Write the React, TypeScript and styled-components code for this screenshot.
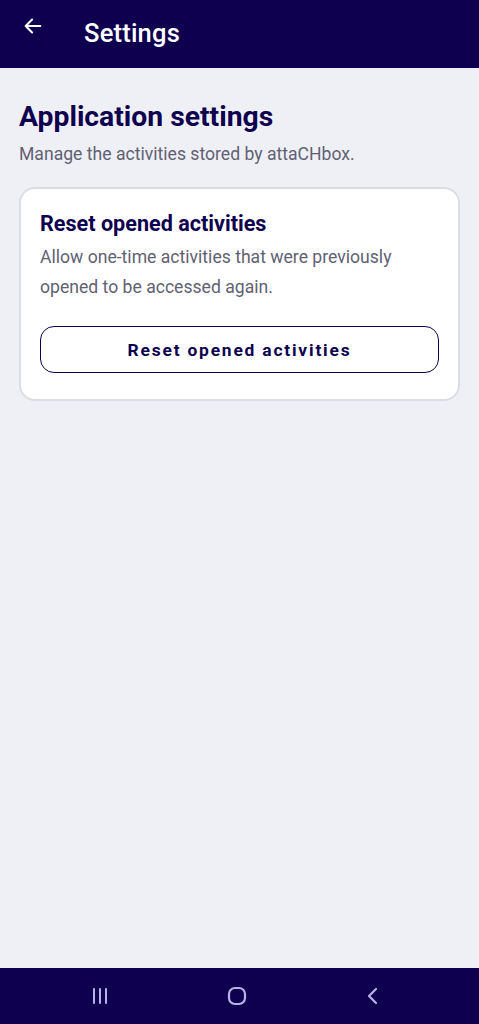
import styled, { createGlobalStyle } from "styled-components";

const GlobalStyle = createGlobalStyle`
  html, body {
    margin: 0;
    padding: 0;
    background: #eff0f5;
    font-family: Roboto, "Liberation Sans", sans-serif;
  }
  * { box-sizing: border-box; }
`;

export default function App() {
  return (
    <>
      <GlobalStyle />
      <StyledScreen>
        <StyledAppBar>
          <StyledBackButton aria-label="Back">
            <svg width="22" height="22" viewBox="0 0 24 24" fill="none">
              <path
                d="M20 12H4M11 5l-7 7 7 7"
                stroke="#fff"
                strokeWidth="2.2"
                strokeLinecap="round"
                strokeLinejoin="round"
              />
            </svg>
          </StyledBackButton>
          <StyledAppBarTitle>Settings</StyledAppBarTitle>
        </StyledAppBar>

        <StyledContent>
          <StyledHeadline>Application settings</StyledHeadline>
          <StyledLead>Manage the activities stored by attaCHbox.</StyledLead>

          <StyledCard>
            <StyledCardTitle>Reset opened activities</StyledCardTitle>
            <StyledCardText>
              Allow one-time activities that were previously opened to be
              accessed again.
            </StyledCardText>
            <StyledOutlineButton>Reset opened activities</StyledOutlineButton>
          </StyledCard>
        </StyledContent>

        <StyledNavBar>
          <svg width="22" height="20" viewBox="0 0 22 20">
            <path
              d="M5 3v14M11 3v14M17 3v14"
              stroke="#b9b2e6"
              strokeWidth="2"
              strokeLinecap="round"
            />
          </svg>
          <svg width="22" height="22" viewBox="0 0 22 22">
            <rect
              x="3"
              y="3"
              width="16"
              height="16"
              rx="6"
              fill="none"
              stroke="#b9b2e6"
              strokeWidth="2.2"
            />
          </svg>
          <svg width="22" height="22" viewBox="0 0 22 22">
            <path
              d="M14 4l-7 7 7 7"
              fill="none"
              stroke="#b9b2e6"
              strokeWidth="2.2"
              strokeLinecap="round"
              strokeLinejoin="round"
            />
          </svg>
        </StyledNavBar>
      </StyledScreen>
    </>
  );
}

const StyledScreen = styled.div`
  display: flex;
  flex-direction: column;
  height: 1024px;
  background: #eff0f5;
`;

const StyledAppBar = styled.header`
  display: flex;
  align-items: center;
  height: 68px;
  padding: 0 0 2px 20px;
  background: #0e004f;
  flex-shrink: 0;
`;

const StyledBackButton = styled.button`
  display: flex;
  align-items: center;
  justify-content: center;
  width: 26px;
  height: 26px;
  padding: 0;
  margin-top: -14px;
  border: none;
  background: none;
`;

const StyledAppBarTitle = styled.h1`
  margin: 0 0 0 38px;
  color: #fff;
  font-size: 25.5px;
  font-weight: 500;
  letter-spacing: 0.2px;
`;

const StyledContent = styled.main`
  flex: 1;
  display: flex;
  flex-direction: column;
  padding: 32px 19px 0;
`;

const StyledHeadline = styled.h2`
  margin: 0;
  color: #0e004f;
  font-size: 28.3px;
  font-weight: 700;
  line-height: 34px;
`;

const StyledLead = styled.p`
  margin: 7px 0 0;
  color: #5f6173;
  font-size: 17.6px;
  line-height: 26px;
`;

const StyledCard = styled.section`
  display: flex;
  flex-direction: column;
  margin-top: 20px;
  padding: 21px 19px 26px;
  background: #fff;
  border: 2px solid #dcdde4;
  border-radius: 16px;
`;

const StyledCardTitle = styled.h3`
  margin: 0;
  color: #0e004f;
  font-size: 21.6px;
  font-weight: 700;
  line-height: 28px;
`;

const StyledCardText = styled.p`
  margin: 4px 0 0;
  color: #5f6173;
  font-size: 17.6px;
  line-height: 30px;
`;

const StyledOutlineButton = styled.button`
  height: 47px;
  margin-top: 24px;
  background: #fff;
  border: 1.5px solid #0e004f;
  border-radius: 14px;
  color: #0e004f;
  font-family: Roboto, "Liberation Sans", sans-serif;
  font-size: 17.4px;
  font-weight: 700;
  letter-spacing: 1.8px;
`;

const StyledNavBar = styled.nav`
  display: flex;
  align-items: center;
  justify-content: space-between;
  height: 56px;
  padding: 0 95px 0 89px;
  background: #0e004f;
  flex-shrink: 0;
`;
